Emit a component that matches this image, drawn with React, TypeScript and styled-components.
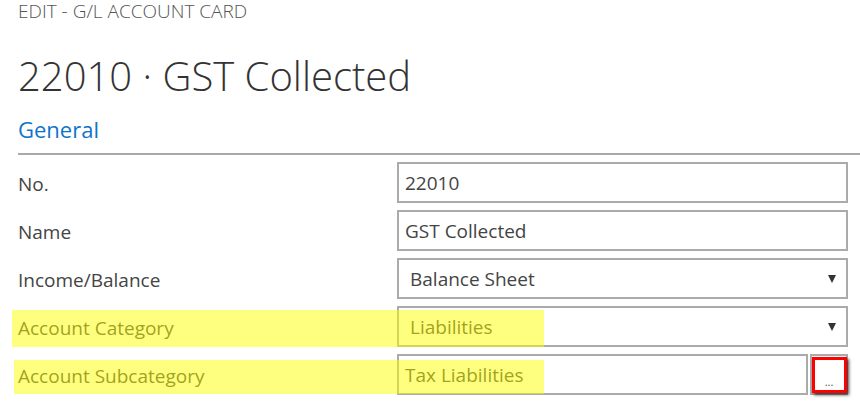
import styled, { createGlobalStyle } from 'styled-components';

const GlobalStyle = createGlobalStyle`
  body {
    margin: 0;
    background: #ffffff;
    font-family: "Open Sans", "Noto Sans", sans-serif;
    color: #333333;
  }
`;

const Page = styled.div`
  width: 860px;
  height: 402px;
  overflow: hidden;
  padding-left: 18px;
  box-sizing: border-box;
`;

const Crumb = styled.div`
  font-size: 19px;
  font-weight: 300;
  line-height: 23px;
  color: #555555;
`;

const Title = styled.h1`
  margin: 29px 0 0;
  font-size: 40px;
  font-weight: 300;
  line-height: 48px;
  color: #333333;
`;

const SectionTitle = styled.h2`
  margin: 15px 0 0;
  font-size: 22px;
  font-weight: 400;
  line-height: 28px;
  color: #0f74c8;
`;

const Divider = styled.div`
  height: 2px;
  margin-top: 10px;
  background: #a9a9a9;
`;

const Fields = styled.div`
  display: flex;
  flex-direction: column;
  gap: 7px;
  padding-top: 7px;
  padding-right: 12px;
`;

const Row = styled.div`
  position: relative;
  display: grid;
  grid-template-columns: 379px 1fr;
  align-items: center;
  height: 41px;
`;

const Label = styled.div`
  padding-top: 3px;
  font-size: 19px;
  line-height: 24px;
  color: #444444;
`;

const Control = styled.div`
  display: flex;
  gap: 2px;
  height: 41px;
`;

const Box = styled.div<{ $select?: boolean }>`
  flex: 1;
  display: flex;
  align-items: center;
  justify-content: space-between;
  border: 2px solid #ababab;
  box-sizing: border-box;
  padding: 0 10px 0 ${(p) => (p.$select ? '11px' : '6px')};
  font-size: 19px;
  color: #444444;
`;

const Arrow = styled.span`
  width: 0;
  height: 0;
  border-left: 4px solid transparent;
  border-right: 4px solid transparent;
  border-top: 8px solid #333333;
`;

const LookupButton = styled.div`
  position: relative;
  width: 38px;
  border: 2px solid #ababab;
  box-sizing: border-box;
  display: flex;
  align-items: flex-end;
  justify-content: center;
  padding-bottom: 6px;
  font-size: 11px;
  line-height: 11px;
  color: #555555;
`;

const RedMark = styled.div`
  position: absolute;
  left: 0;
  top: 1px;
  width: 35px;
  height: 36px;
  box-sizing: border-box;
  border: 3px solid #ff0000;
  box-shadow: 2px 2px 3px rgba(0, 0, 0, 0.7);
`;

const Highlight = styled.div<{ $left: number; $width: number; $top: number; $height: number }>`
  position: absolute;
  left: ${(p) => p.$left}px;
  top: ${(p) => p.$top}px;
  width: ${(p) => p.$width}px;
  height: ${(p) => p.$height}px;
  background: rgba(255, 255, 0, 0.5);
  pointer-events: none;
`;

type Field = {
  label: string;
  value: string;
  kind: 'text' | 'select' | 'lookup';
  marked?: { left: number; top: number; height: number };
};

const fields: Field[] = [
  { label: 'No.', value: '22010', kind: 'text' },
  { label: 'Name', value: 'GST Collected', kind: 'text' },
  { label: 'Income/Balance', value: 'Balance Sheet', kind: 'select' },
  { label: 'Account Category', value: 'Liabilities', kind: 'select', marked: { left: -6, top: 4, height: 37 } },
  { label: 'Account Subcategory', value: 'Tax Liabilities', kind: 'lookup', marked: { left: -4, top: 6, height: 34 } },
];

export default function App() {
  return (
    <>
      <GlobalStyle />
      <Page>
        <Crumb>EDIT - G/L ACCOUNT CARD</Crumb>
        <Title>22010 · GST Collected</Title>
        <SectionTitle>General</SectionTitle>
        <Divider />
        <Fields>
          {fields.map((f) => (
            <Row key={f.label}>
              <Label>{f.label}</Label>
              <Control>
                <Box $select={f.kind === 'select'}>
                  <span>{f.value}</span>
                  {f.kind === 'select' && <Arrow />}
                </Box>
                {f.kind === 'lookup' && (
                  <LookupButton>
                    ...
                    <RedMark />
                  </LookupButton>
                )}
              </Control>
              {f.marked && (
                <>
                  <Highlight
                    $left={f.marked.left}
                    $width={375 - f.marked.left}
                    $top={f.marked.top}
                    $height={f.marked.height}
                  />
                  <Highlight $left={375} $width={151} $top={f.marked.top} $height={f.marked.height} />
                </>
              )}
            </Row>
          ))}
        </Fields>
      </Page>
    </>
  );
}
